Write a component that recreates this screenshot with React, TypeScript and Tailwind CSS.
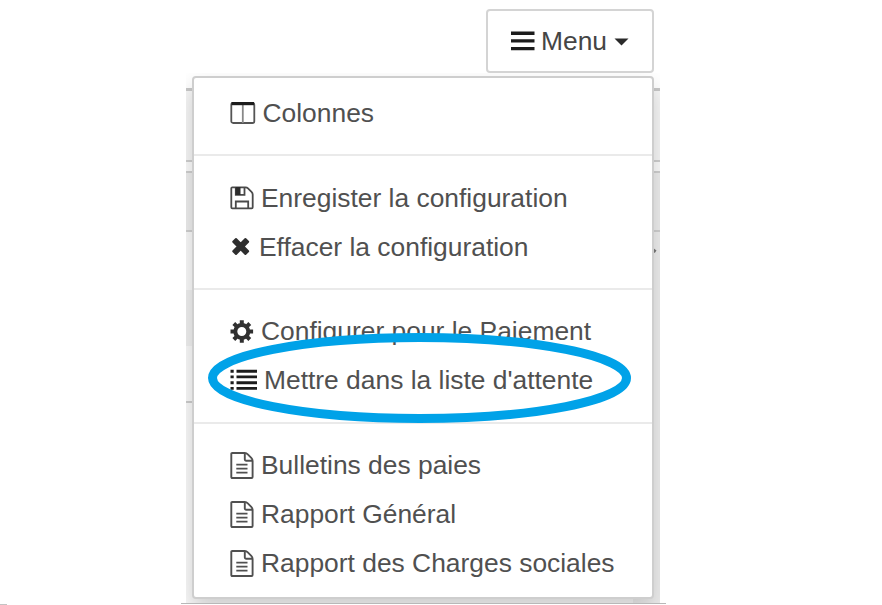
import type { ReactNode } from 'react';

const ICON = 'block shrink-0 h-[27px]';

function ColumnsIcon() {
  return (
    <svg className={`${ICON} w-[26px]`} viewBox="0 0 26 27" fill="none">
      <rect x="1.300" y="4" width="23" height="20" rx="1.800" stroke="#555" strokeWidth="1.800" />
      <path d="M12.800 5V24" stroke="#888" strokeWidth="1.800" />
      <path d="M1.500 4.600H24" stroke="#1c1c1c" strokeWidth="3.200" />
    </svg>
  );
}

function SaveIcon() {
  return (
    <svg className={`${ICON} w-[24px]`} viewBox="0 0 24 27" fill="none" stroke="#4a4a4a" strokeWidth="1.800">
      <path d="M1.300 4.300Q1.300 3.300 2.300 3.300H15.500Q17 3.300 18 4.300L21.500 7.800Q22.700 9 22.700 10.500V23.300Q22.700 24.300 21.700 24.300H2.300Q1.300 24.300 1.300 23.300Z" />
      <path d="M5.800 24V17.500H18.200V24" />
      <path d="M5.800 4V10.800H14.500V4" />
      <path d="M5.500 3H10.500V11H5.500Z" fill="#2c2c2c" stroke="none" />
    </svg>
  );
}

function TimesIcon() {
  return (
    <svg className={`${ICON} w-[22px]`} viewBox="0 0 22 27">
      <path
        d="M3.200 8.800L6 6L10.700 10.700L15.400 6L18.200 8.800L13.500 13.500L18.200 18.200L15.400 21L10.700 16.300L6 21L3.200 18.200L7.900 13.500Z"
        fill="#2e2e2e"
        stroke="#2e2e2e"
        strokeWidth="2"
        strokeLinejoin="round"
      />
    </svg>
  );
}

function CogIcon() {
  return (
    <svg className={`${ICON} w-[24px]`} viewBox="0 0 24 27" fill="none" stroke="#303030">
      <circle cx="11.800" cy="13.500" r="6.500" strokeWidth="4" />
      <path
        d="M11.800 2.200V6M11.800 21V24.800M.5 13.500H4.300M19.300 13.500H23.100M3.800 5.500L6.500 8.200M17.100 18.800L19.800 21.500M3.800 21.500L6.500 18.800M17.100 8.200L19.800 5.500"
        strokeWidth="4"
      />
    </svg>
  );
}

function ListIcon() {
  return (
    <svg className={`${ICON} w-[27px]`} viewBox="0 0 27 27" stroke="#1c1c1c" strokeWidth="2.900">
      <path d="M.5 4.200H3.700M6.500 4.200H27M.5 9.900H3.700M6.500 9.900H27M.5 15.700H3.700M6.500 15.700H27M.5 21.400H3.700M6.500 21.400H27" />
    </svg>
  );
}

function FileIcon() {
  return (
    <svg className={`${ICON} w-[24px]`} viewBox="0 0 24 27" fill="none" stroke="#505050" strokeWidth="1.900">
      <path d="M1.300 2Q1.300 1 2.300 1H14.800Q16.500 1 17.800 2.300L21.300 5.800Q22.600 7.100 22.600 9V25Q22.600 26 21.600 26H2.300Q1.300 26 1.300 25Z" />
      <path d="M14.800 1V7.500Q14.800 8.700 16 8.700H22.600" />
      <path d="M6.300 12.600H17.500M6.300 16.600H17.500M6.300 20.600H17.500" />
    </svg>
  );
}

function MenuItem({ icon, className = 'gap-[7px]', children }: { icon: ReactNode; className?: string; children: ReactNode }) {
  return (
    <li className={`flex h-[49px] items-center ${className}`}>
      {icon}
      <span>{children}</span>
    </li>
  );
}

function Divider() {
  return <li className="my-[17px] h-[2px] bg-[#eaeaea]" />;
}

export default function App() {
  return (
    <div className="relative h-[605px] w-[882px] overflow-hidden bg-white font-['Liberation_Sans',Arial,sans-serif] text-[26.4px] leading-none text-[#505050]">
      <header className="ml-[486px] pt-[9px]">
        <button className="flex h-[64px] w-[168px] items-center rounded-[4px] border-2 border-[#d4d4d4] bg-white pl-[23px] text-[#454545]">
          <svg className="h-[20px] w-[24px]" viewBox="0 0 24 20" stroke="#1c1c1c" strokeWidth="3.400">
            <path d="M0 2.200H23.500M0 9.900H23.500M0 17.600H23.500" />
          </svg>
          <span className="ml-[6px] mt-px">Menu</span>
          <svg className="ml-[7px] mt-[2px] h-[8px] w-[15px]" viewBox="0 0 15 8" fill="#2a2a2a">
            <path d="M.5.500H14.500L7.500 7.500Z" />
          </svg>
        </button>
      </header>

      <main className="relative ml-[186px] h-[530px] w-[474px] overflow-hidden pt-[15px]">
        <div className="h-[3px] bg-[#c8c8c8]" />
        <div className="h-[69px] bg-[#f7f7f7]" />
        <div className="h-[2px] bg-[#d0d0d0]" />
        <div className="h-[9px] bg-[#fcfcfc]" />
        <div className="h-[2px] bg-[#d0d0d0]" />
        <div className="h-[57px] bg-[#eeeeee]" />
        <div className="h-[2px] bg-[#d0d0d0]" />
        <div className="flex">
          <div className="flex-1">
            <div className="h-[58px] bg-[#fafafa]" />
            <div className="h-[56px] bg-[#f0f0f0]" />
            <div className="h-[55px] bg-[#fafafa]" />
            <div className="h-[2px] bg-[#cdcdcd]" />
            <div className="h-[200px] bg-[#fafafa]" />
          </div>
          <div className="w-[27px] bg-[#eeeeee] pt-[17px]">
            <div className="ml-auto mr-[4px] h-[3px] w-[4px] rotate-[35deg] bg-[#777]" />
          </div>
        </div>

        <ul className="absolute left-[6px] top-[3px] h-[523px] w-[462px] rounded-[4px] border-2 border-[#cecece] bg-white pt-[10px] shadow-[0_11px_22px_rgba(0,0,0,0.175)] [&>li.flex]:pl-[36px]">
          <MenuItem icon={<ColumnsIcon />} className="gap-[6.500px] [&>span]:mt-px">Colonnes</MenuItem>
          <Divider />
          <MenuItem icon={<SaveIcon />} className="gap-[7px] [&>span]:mt-px">Enregister la configuration</MenuItem>
          <MenuItem icon={<TimesIcon />} className="gap-[7px] [&>span]:mt-px">Effacer la configuration</MenuItem>
          <Divider />
          <MenuItem icon={<CogIcon />}>Configurer pour le Paiement</MenuItem>
          <MenuItem icon={<ListIcon />}>Mettre dans la liste d'attente</MenuItem>
          <Divider />
          <MenuItem icon={<FileIcon />}>Bulletins des paies</MenuItem>
          <MenuItem icon={<FileIcon />}>Rapport Général</MenuItem>
          <MenuItem icon={<FileIcon />}>Rapport des Charges sociales</MenuItem>
        </ul>
      </main>

      <footer className="flex">
        <div className="mt-px h-px w-[7px] bg-[#c4c4c4]" />
        <div className="ml-[174px] h-px w-[485px] bg-[#b8b8b8]" />
      </footer>

      <svg className="pointer-events-none absolute left-[206px] top-[331px] h-[94px] w-[428px]" viewBox="0 0 428 94" fill="none">
        <ellipse cx="213.500" cy="47" rx="207" ry="40.500" stroke="#00a2e8" strokeWidth="9" />
      </svg>
    </div>
  );
}
